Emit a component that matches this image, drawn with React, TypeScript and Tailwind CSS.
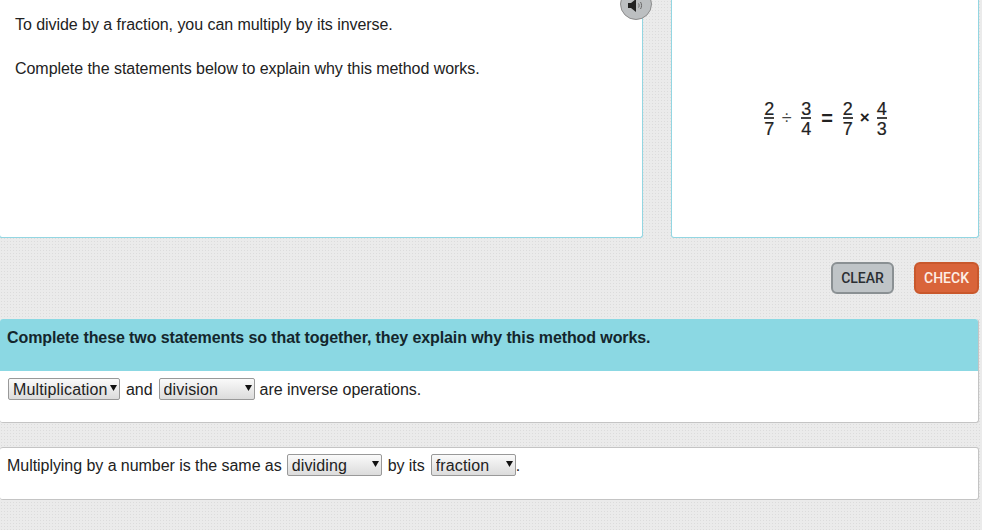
import React from "react";

const Fraction: React.FC<{ top: string; bottom: string }> = ({ top, bottom }) => (
  <span className="flex w-[10px] flex-col items-center text-[18px] leading-[18px] text-[#222] [-webkit-text-stroke:0.2px_#222]">
    <span className="h-[17px]">{top}</span>
    <span className="h-[2px] w-[10px] bg-[#444]" />
    <span className="h-[18px] pt-[1px]">{bottom}</span>
  </span>
);

const Dropdown: React.FC<{ value: string; width: string }> = ({ value, width }) => (
  <span className={`relative inline-flex h-[22px] ${width} shrink-0`}>
    <select
      defaultValue={value}
      className="h-full w-full appearance-none rounded-[2px] border border-[#999] bg-gradient-to-b from-[#fafafa] to-[#dcdcdc] pl-[4px] pt-[1px] text-[16px] leading-[20px] tracking-[0.15px] text-[#222]"
    >
      <option>{value}</option>
    </select>
    <svg viewBox="0 0 7 6" className="absolute right-[3px] top-[7px] h-[6px] w-[7px]">
      <path d="M0 0h7L3.5 6z" fill="#111" />
    </svg>
  </span>
);

export default function App() {
  return (
    <div className="h-[530px] w-[982px] overflow-hidden bg-[#ebebeb] bg-[image:radial-gradient(#dcdcdc_1px,transparent_1px)] bg-[length:3px_3px] font-['Liberation_Sans',sans-serif] text-[#222]">
      {/* top panels */}
      <div className="flex h-[238px] items-stretch pr-[3px]">
        <div className="relative ml-[-1px] w-[644px] rounded-b-[3px] border border-t-0 border-[#93d6e2] bg-white pl-[15px] pt-[16px] text-[16px] leading-[18px] tracking-[-0.05px]">
          <p>To divide by a fraction, you can multiply by its inverse.</p>
          <p className="mt-[26px]">Complete the statements below to explain why this method works.</p>
          <div className="absolute right-[-10px] top-[-12px] flex h-[32px] w-[32px] justify-center rounded-full border border-[#8c8c8c] bg-[#bcbfc1]">
            <svg viewBox="0 0 16 14" className="mt-[10px] h-[14px] w-[16px]">
              <path d="M0 4h3L8 0v13L3 9H0z" fill="#222" />
              <path d="M10.5 4.5c.8 1.2.8 2.8 0 4M12.5 3c1.4 2 1.4 5 0 7" fill="none" stroke="#666" strokeWidth="1" />
            </svg>
          </div>
        </div>
        <div className="ml-[28px] flex flex-1 items-center justify-center rounded-b-[3px] border border-t-0 border-[#93d6e2] bg-white">
          <div className="ml-[1px] mt-[-1px] flex items-center text-[#222]">
            <Fraction top="2" bottom="7" />
            <span className="ml-[7.5px] mr-[9.5px] text-[18px] text-[#444]">÷</span>
            <Fraction top="3" bottom="4" />
            <span className="mx-[10px] text-[20px] font-bold">=</span>
            <Fraction top="2" bottom="7" />
            <span className="mx-[7px] text-[17px] font-bold">×</span>
            <Fraction top="4" bottom="3" />
          </div>
        </div>
      </div>

      {/* buttons */}
      <div className="mt-[24px] flex justify-end gap-[20px] pr-[3px] font-['Roboto',sans-serif] text-[14px] font-medium">
        <button className="flex h-[32px] w-[63px] items-center justify-center rounded-[6px] border-2 border-[#8a9093] bg-[#bfc4c7] pt-[1px] text-[#2b2f33]">
          CLEAR
        </button>
        <button className="flex h-[32px] w-[65px] items-center justify-center rounded-[6px] border-2 border-[#c9582c] bg-[#d9643a] pt-[1px] text-[#fdeee6]">
          CHECK
        </button>
      </div>

      {/* statements */}
      <div className="mt-[25px] mr-[3px] h-[104px] rounded-[3px] border-b border-r border-[#c4c4c4] bg-white">
        <h2 className="h-[52px] rounded-t-[3px] bg-[#8bd8e3] pl-[7px] pt-[10px] text-[16px] font-bold leading-[18px] tracking-[-0.1px] text-[#14262c]">
          Complete these two statements so that together, they explain why this method works.
        </h2>
        <div className="flex items-start pl-[8px] pt-[7px] text-[16px] leading-[22px] tracking-[-0.05px]">
          <Dropdown value="Multiplication" width="w-[112px]" />
          <span className="mx-[6px] mt-[1px]">and</span>
          <Dropdown value="division" width="w-[96px]" />
          <span className="ml-[5px] mt-[1px]">are inverse operations.</span>
        </div>
      </div>

      <div className="mt-[24px] mr-[3px] flex h-[53px] items-start rounded-[3px] border border-l-0 border-[#c4c4c4] bg-white pl-[7px] pt-[6px] text-[16px] leading-[22px] tracking-[-0.05px]">
        <span className="mr-[5px] mt-[1px]">Multiplying by a number is the same as</span>
        <Dropdown value="dividing" width="w-[95px]" />
        <span className="mx-[6px] mt-[1px]">by its</span>
        <Dropdown value="fraction" width="w-[85px]" />
        <span className="mt-[1px]">.</span>
      </div>
    </div>
  );
}
